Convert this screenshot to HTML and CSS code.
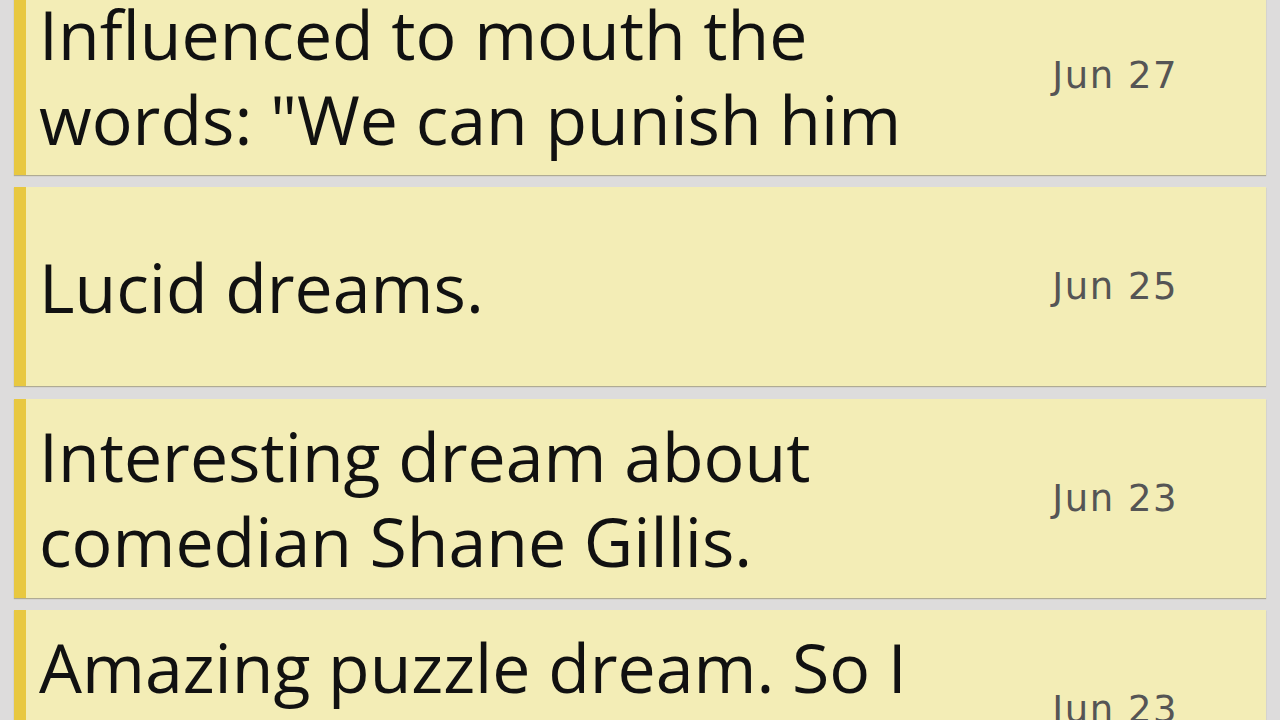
FILE: index.html
```html
<!DOCTYPE html>
<html>
<head>
<meta charset="utf-8">
<link rel="stylesheet" href="styles.css">
</head>
<body>
<div class="list">
  <div class="card">
    <div class="text">Influenced to mouth the words: "We can punish him</div>
    <div class="date">Jun 27</div>
  </div>
  <div class="card">
    <div class="text">Lucid dreams.</div>
    <div class="date">Jun 25</div>
  </div>
  <div class="card">
    <div class="text">Interesting dream about comedian Shane Gillis.</div>
    <div class="date">Jun 23</div>
  </div>
  <div class="card">
    <div class="text">Amazing puzzle dream. So I was solving a puzzle.</div>
    <div class="date">Jun 23</div>
  </div>
</div>
</body>
</html>
```
FILE: styles.css
```css
html, body {
  margin: 0;
  padding: 0;
  background: #dddcdc;
  overflow: hidden;
  height: 720px;
}
.list {
  display: flex;
  flex-direction: column;
  gap: 12.3px;
  margin-top: -24px;
  padding: 0 14px;
}
.card {
  height: 199px;
  box-sizing: border-box;
  background: #f3edb6;
  border-left: 12px solid #e8c840;
  box-shadow: 0 1px 1px rgba(120, 110, 60, 0.45);
  display: flex;
  align-items: center;
  padding-left: 13px;
  padding-right: 88px;
}
.text {
  flex: 1;
  min-width: 0;
  padding-right: 60px;
  font-family: "Open Sans", sans-serif;
  font-size: 68px;
  font-weight: 500;
  line-height: 85px;
  color: #111111;
}
.date {
  font-family: "DejaVu Sans", sans-serif;
  font-size: 37px;
  letter-spacing: 1.5px;
  color: #555555;
  white-space: nowrap;
}
```
